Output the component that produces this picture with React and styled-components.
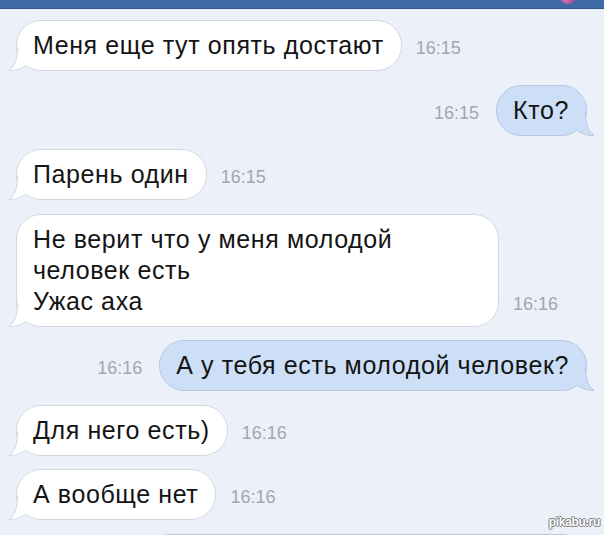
import React from 'react';
import styled, { createGlobalStyle } from 'styled-components';

const GlobalStyle = createGlobalStyle`
  html, body {
    margin: 0;
    padding: 0;
    background: #ecf1f9;
    overflow: hidden;
  }

  body {
    font-family: "Liberation Sans", Arial, Helvetica, sans-serif;
  }
`;

const messages = [
  { id: 1, text: ['Меня еще тут опять достают'], time: '16:15' },
  { id: 2, text: ['Кто?'], time: '16:15', out: true },
  { id: 3, text: ['Парень один'], time: '16:15' },
  {
    id: 4,
    text: ['Не верит что у меня молодой', 'человек есть', 'Ужас аха'],
    time: '16:16',
    width: 483,
  },
  { id: 5, text: ['А у тебя есть молодой человек?'], time: '16:16', out: true },
  { id: 6, text: ['Для него есть)'], time: '16:16' },
  { id: 7, text: ['А вообще нет'], time: '16:16' },
  { id: 8, text: [''], time: '', out: true, width: 442 },
];

const Tail = ({ out }) => (
  <TailSvg $out={out} width="26" height="24" viewBox="0 0 26 24">
    <path
      d="M9.5 0 C9.5 13 6.5 19.5 1 23.5 C7 23.8 12.5 22 17.5 18.5 L24 12 L24 0 Z"
      fill={out ? '#cddff6' : '#ffffff'}
    />
    <path
      d="M9.5 0 C9.5 13 6.5 19.5 1 23.5 C7 23.8 12.5 22 17.5 18.5"
      fill="none"
      stroke={out ? '#b7c9e2' : '#d3d8e0'}
      strokeWidth="1"
    />
  </TailSvg>
);

const App = () => {
  return (
    <>
      <GlobalStyle />
      <Screen>
        <Header>
          <Avatar />
        </Header>
        <List>
          {messages.map((m) => (
            <Row key={m.id} $out={m.out}>
              {m.out && m.time && <Time>{m.time}</Time>}
              <Bubble $out={m.out} $width={m.width}>
                {m.text.map((line, i) => (
                  <Line key={i}>{line || '\u00a0'}</Line>
                ))}
                <Tail out={m.out} />
              </Bubble>
              {!m.out && <Time>{m.time}</Time>}
            </Row>
          ))}
        </List>
        <Watermark>pikabu.ru</Watermark>
      </Screen>
    </>
  );
};

const Screen = styled.div`
  position: relative;
  width: 604px;
  height: 535px;
  overflow: hidden;
  background: #ecf1f9;
`;

const Header = styled.header`
  height: 8px;
  background: #3e6aa6;
  border-bottom: 1px solid #30598f;
  display: flex;
  justify-content: flex-end;
  align-items: flex-end;
  padding-right: 27px;
  overflow: hidden;
`;

const Avatar = styled.div`
  width: 18px;
  height: 18px;
  flex: none;
  border-radius: 50%;
  margin-bottom: 4px;
  background: radial-gradient(circle at 40% 80%, #d36fb8 0%, #8a3a8c 60%, #5a3a7a 100%);
`;

const List = styled.main`
  display: flex;
  flex-direction: column;
  gap: 13.5px;
  padding: 11px 17px 0 16px;
`;

const Row = styled.div`
  display: flex;
  align-items: flex-end;
  justify-content: ${({ $out }) => ($out ? 'flex-end' : 'flex-start')};
  gap: ${({ $out }) => ($out ? '17px' : '14px')};
`;

const Bubble = styled.div`
  position: relative;
  box-sizing: border-box;
  width: ${({ $width }) => ($width ? `${$width}px` : 'auto')};
  padding: 9px 17px 9px 16px;
  border-radius: 25px;
  background: ${({ $out }) => ($out ? '#cddff6' : '#ffffff')};
  border: 1px solid ${({ $out }) => ($out ? '#b7c9e2' : '#d3d8e0')};
  color: #141414;
  font-size: 25px;
  letter-spacing: 0.6px;
  line-height: 31px;
`;

const Line = styled.div`
  white-space: nowrap;
`;

const TailSvg = styled.svg`
  position: absolute;
  bottom: -1px;
  ${({ $out }) => ($out ? 'right: -9px;' : 'left: -9px;')}
  transform: ${({ $out }) => ($out ? 'scaleX(-1)' : 'none')};
  overflow: visible;
`;

const Time = styled.span`
  padding-bottom: 13px;
  font-size: 18px;
  line-height: 20px;
  color: #a3a7ae;
`;

const Watermark = styled.div`
  position: absolute;
  right: 4px;
  bottom: 6px;
  font-size: 12px;
  font-weight: bold;
  letter-spacing: -0.3px;
  color: #ffffff;
  text-shadow: 1px 0 0 #7a7a7a, -1px 0 0 #7a7a7a, 0 1px 0 #7a7a7a, 0 -1px 0 #7a7a7a;
`;

export default App;
